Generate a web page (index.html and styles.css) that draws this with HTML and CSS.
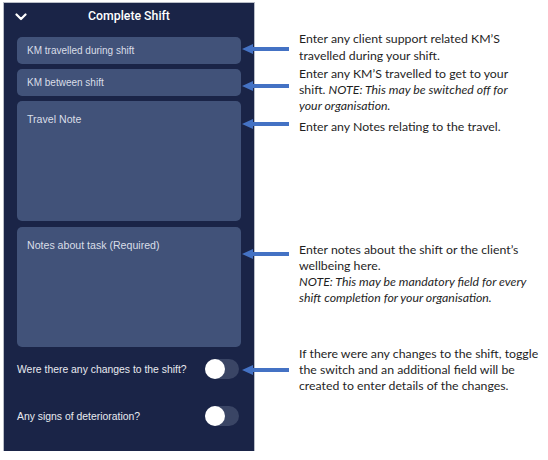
FILE: index.html
```html
<!DOCTYPE html>
<html lang="en">
<head>
    <meta charset="UTF-8" />
    <meta name="viewport" content="width=device-width, initial-scale=1.0"/>

    <title>Complete Shift</title>

    <link rel="stylesheet" href="styles.css">
</head>
<body>

<div class="page">

    <!-- App screen -->
    <section class="phone">
        <header class="phone-header">
            <svg class="back" viewBox="0 0 12 8" width="12" height="8">
                <path d="M1.5 1.5l4.5 4.5 4.5-4.5" fill="none" stroke="#fff" stroke-width="2.2" stroke-linecap="round" stroke-linejoin="round"/>
            </svg>
            <h1>Complete Shift</h1>
        </header>

        <div class="fields">
            <div class="field field-line">KM travelled during shift</div>
            <div class="field field-line">KM between shift</div>
            <div class="field field-area">Travel Note</div>
            <div class="field field-area field-task">Notes about task (Required)</div>
        </div>

        <div class="switch-row switch-first">
            <span>Were there any changes to the shift?</span>
            <span class="switch"><span class="knob"></span></span>
        </div>
        <div class="switch-row">
            <span>Any signs of deterioration?</span>
            <span class="switch"><span class="knob"></span></span>
        </div>
    </section>

    <!-- Callouts -->
    <aside class="notes">
        <div class="note note-km">
            <svg class="arrow" viewBox="0 0 47 10" width="47" height="10"><path d="M0 5L11 0V3H47V7H11V10Z"/></svg>
            <p>Enter any client support related KM’S<br>travelled during your shift.</p>
        </div>
        <div class="note note-between">
            <svg class="arrow" viewBox="0 0 47 10" width="47" height="10"><path d="M0 5L11 0V3H47V7H11V10Z"/></svg>
            <p>Enter any KM’S travelled to get to your<br>shift. <em>NOTE: This may be switched off for<br>your organisation.</em></p>
        </div>
        <div class="note note-travel">
            <svg class="arrow" viewBox="0 0 47 10" width="47" height="10"><path d="M0 5L11 0V3H47V7H11V10Z"/></svg>
            <p>Enter any Notes relating to the travel.</p>
        </div>
        <div class="note note-task">
            <svg class="arrow" viewBox="0 0 47 10" width="47" height="10"><path d="M0 5L11 0V3H47V7H11V10Z"/></svg>
            <p>Enter notes about the shift or the client’s<br>wellbeing here.<br><em>NOTE: This may be mandatory field for every<br>shift completion for your organisation.</em></p>
        </div>
        <div class="note note-changes">
            <svg class="arrow" viewBox="0 0 47 10" width="47" height="10"><path d="M0 5L11 0V3H47V7H11V10Z"/></svg>
            <p>If there were any changes to the shift, toggle<br>the switch and an additional field will be<br>created to enter details of the changes.</p>
        </div>
    </aside>

</div>

</body>
</html>
```

FILE: styles.css
```css
body {
    margin: 0;
    background: #fff;
    color: #1f1f1f;
}

.page {
    display: flex;
    align-items: flex-start;
}

/* Phone screen */
.phone {
    box-sizing: border-box;
    width: 250px;
    height: 448px;
    margin: 3px 0 0 4px;
    padding: 0 13px;
    background: #1a2447;
    box-shadow: 0 0 0 1px #b9bec8;
    font-family: "Liberation Sans", Arial, sans-serif;
    color: #e4e7ee;
    flex-shrink: 0;
}

.phone-header {
    display: flex;
    align-items: center;
    justify-content: center;
    position: relative;
    height: 26px;
    margin-bottom: 8px;
}

.phone-header .back {
    position: absolute;
    left: -2px;
    top: 10px;
}

.phone-header h1 {
    margin: 0;
    font-family: Roboto, "Liberation Sans", sans-serif;
    font-size: 12.3px;
    font-weight: 500;
    color: #fff;
}

.fields {
    display: flex;
    flex-direction: column;
    gap: 5px;
}

.field {
    box-sizing: border-box;
    background: #415279;
    border-radius: 5px;
    padding: 0 10px;
    color: #d9dee8;
}

.field-line {
    height: 27px;
    line-height: 27px;
    font-size: 10px;
}

.field-area {
    height: 120px;
    padding-top: 12px;
    font-size: 10.6px;
    line-height: 13px;
}

.field-task {
    margin-top: 1px;
}

/* Toggle rows */
.switch-row {
    display: flex;
    align-items: center;
    justify-content: space-between;
    height: 20px;
    margin-top: 27px;
    padding-right: 2px;
    font-size: 10.4px;
    color: #e8eaf0;
}

.switch-first {
    margin-top: 12px;
}

.switch {
    position: relative;
    width: 34px;
    height: 20px;
    border-radius: 10px;
    background: #3a4565;
}

.switch .knob {
    position: absolute;
    left: 0;
    top: 0;
    width: 20px;
    height: 20px;
    border-radius: 50%;
    background: #fff;
}

/* Callouts */
.notes {
    margin-left: -12px;
    padding-top: 30px;
    font-family: Lato, "Open Sans", sans-serif;
    font-size: 12.3px;
    line-height: 16px;
}

.note {
    display: flex;
    align-items: flex-start;
    gap: 10px;
}

.note p {
    margin: 0;
    white-space: nowrap;
}

.note .arrow {
    flex-shrink: 0;
    fill: #4472c4;
}

.note-km p { line-height: 17px; }
.note-km .arrow { margin-top: 14px; }

.note-between { margin-top: 2px; }
.note-between .arrow { margin-top: 15px; }

.note-travel { margin-top: 5px; }
.note-travel .arrow { margin-top: 0; }

.note-task { margin-top: 107px; }
.note-task .arrow { margin-top: 7px; }

.note-changes { margin-top: 40px; }
.note-changes .arrow { margin-top: 19px; }
```
